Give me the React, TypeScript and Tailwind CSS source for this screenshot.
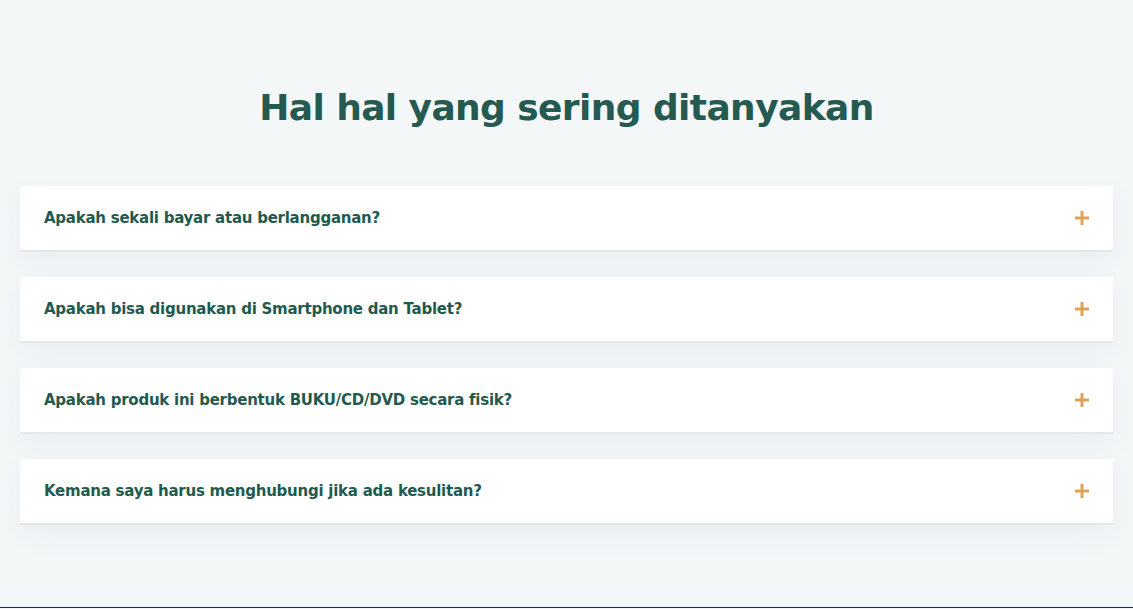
import React from "react";

const questions = [
  "Apakah sekali bayar atau berlangganan?",
  "Apakah bisa digunakan di Smartphone dan Tablet?",
  "Apakah produk ini berbentuk BUKU/CD/DVD secara fisik?",
  "Kemana saya harus menghubungi jika ada kesulitan?",
];

function Plus() {
  return (
    <svg width="14" height="14" viewBox="0 0 14 14" aria-hidden="true">
      <rect x="5.5" y="0" width="3" height="14" rx="0.5" fill="#dfa257" />
      <rect x="0" y="5.5" width="14" height="3" rx="0.5" fill="#dfa257" />
    </svg>
  );
}

export default function App() {
  return (
    <div
      className="min-h-[609px] bg-[#f4f7f8] flex flex-col"
      style={{ fontFamily: '"DejaVu Sans", "Noto Sans", sans-serif' }}
    >
      <h2 className="text-center text-[36px] leading-[44px] font-bold text-[#245a50] pt-[86px] tracking-[-0.6px]">
        Hal hal yang sering ditanyakan
      </h2>
      <div className="flex flex-col gap-[25px] px-[20px] pt-[56px]">
        {questions.map((q) => (
          <div
            key={q}
            className="h-[66px] bg-white border-b-2 border-[#e4e7e8] shadow-[0_10px_30px_rgba(30,60,80,0.05)] flex items-center justify-between pl-[24px] pr-[24px]"
          >
            <span className="text-[15px] font-semibold text-[#1f5a4f] tracking-[-0.25px]">{q}</span>
            <Plus />
          </div>
        ))}
      </div>
      <div className="flex-1" />
      <div className="h-px bg-[#0b16d8] mb-px" />
    </div>
  );
}
